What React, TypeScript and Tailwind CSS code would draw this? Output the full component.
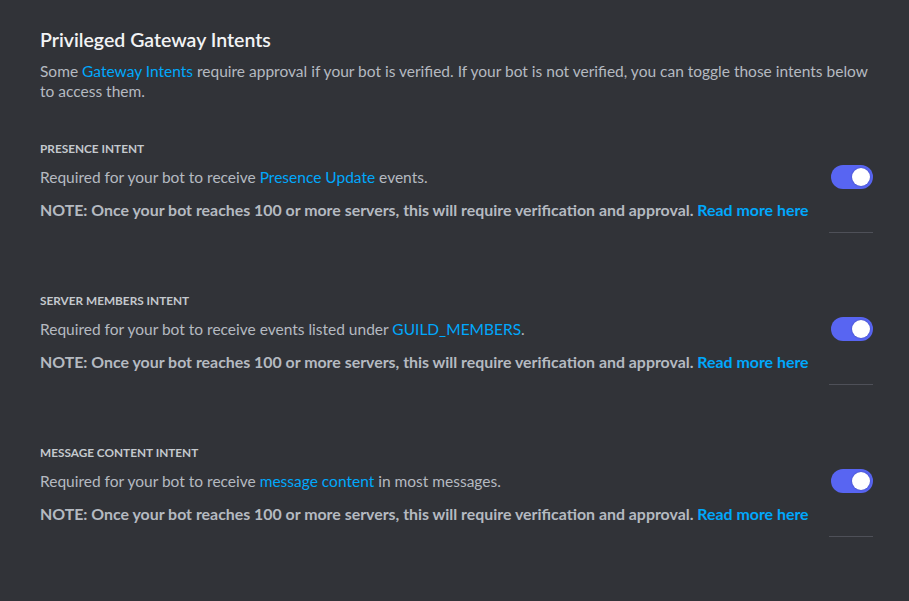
const intents = [
  {
    title: "PRESENCE INTENT",
    before: "Required for your bot to receive ",
    link: "Presence Update",
    after: " events.",
  },
  {
    title: "SERVER MEMBERS INTENT",
    before: "Required for your bot to receive events listed under ",
    link: "GUILD_MEMBERS",
    after: ".",
  },
  {
    title: "MESSAGE CONTENT INTENT",
    before: "Required for your bot to receive ",
    link: "message content",
    after: " in most messages.",
  },
];

function Toggle() {
  return (
    <div className="flex h-6 w-[42px] items-center justify-end rounded-full bg-[#5865f2] px-[3px]">
      <div className="h-[18px] w-[18px] rounded-full bg-white shadow-[0_0_2px_rgba(0,0,0,0.3)]" />
    </div>
  );
}

export default function App() {
  return (
    <div className="h-[601px] w-full bg-[#313338] pl-10 pr-9 pt-7 font-['Lato',sans-serif]">
      <h2 className="text-[19.5px] leading-6 font-semibold text-[#f2f3f5]">Privileged Gateway Intents</h2>
      <p className="mt-[9px] text-[15.5px] leading-5 text-[#b5bac1]">
        Some <span className="text-[#00a8fc]">Gateway Intents</span> require approval if your bot is verified. If your bot is not verified, you can toggle those intents below to access them.
      </p>

      <div className="mt-10 flex flex-col gap-[60px]">
        {intents.map((intent) => (
          <section key={intent.title}>
            <h3 className="text-[11.8px] leading-4 font-bold uppercase text-[#c4c9ce]">{intent.title}</h3>
            <div className="mt-2 flex items-start justify-between">
              <div className="pt-[2px]">
                <p className="text-[15.5px] leading-5 text-[#b5bac1]">
                  {intent.before}
                  <span className="text-[#00a8fc]">{intent.link}</span>
                  {intent.after}
                </p>
                <p className="mt-[13px] text-[15.9px] leading-5 font-bold text-[#b5bac1]">
                  NOTE: Once your bot reaches 100 or more servers, this will require verification and approval.{" "}
                  <span className="text-[#00a8fc]">Read more here</span>
                </p>
              </div>
              <div className="flex w-11 flex-col items-end">
                <Toggle />
                <div className="mt-[43px] h-px w-11 bg-[#4e5058]" />
              </div>
            </div>
          </section>
        ))}
      </div>
    </div>
  );
}
